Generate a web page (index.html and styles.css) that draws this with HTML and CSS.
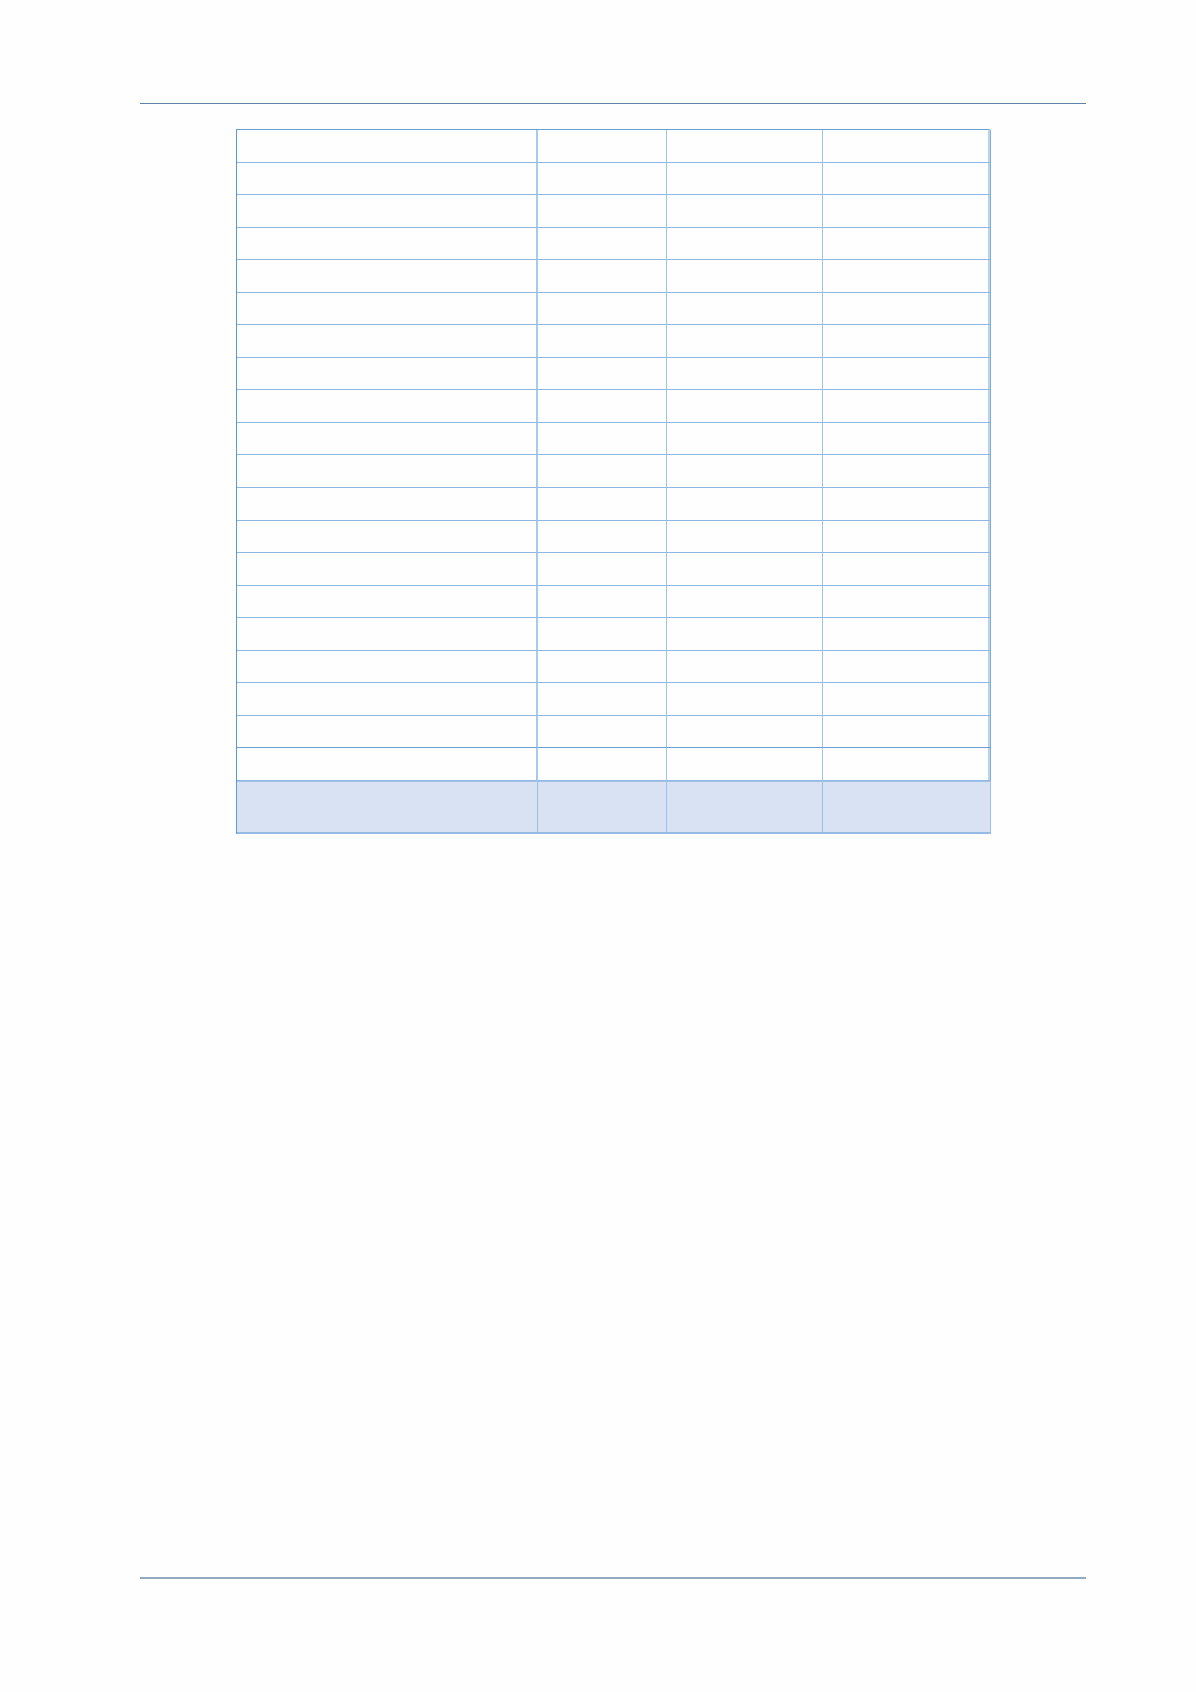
FILE: index.html
```html
<!DOCTYPE html>
<html lang="en">
<head>
<meta charset="utf-8">
<title>Table page</title>
<link rel="stylesheet" href="styles.css">
</head>
<body>
<div class="page">
  <div class="rule-top"></div>
  <div class="grid">
    <div class="c"></div><div class="c"></div><div class="c"></div><div class="c"></div>
    <div class="c"></div><div class="c"></div><div class="c"></div><div class="c"></div>
    <div class="c"></div><div class="c"></div><div class="c"></div><div class="c"></div>
    <div class="c"></div><div class="c"></div><div class="c"></div><div class="c"></div>
    <div class="c"></div><div class="c"></div><div class="c"></div><div class="c"></div>
    <div class="c"></div><div class="c"></div><div class="c"></div><div class="c"></div>
    <div class="c"></div><div class="c"></div><div class="c"></div><div class="c"></div>
    <div class="c"></div><div class="c"></div><div class="c"></div><div class="c"></div>
    <div class="c"></div><div class="c"></div><div class="c"></div><div class="c"></div>
    <div class="c"></div><div class="c"></div><div class="c"></div><div class="c"></div>
    <div class="c"></div><div class="c"></div><div class="c"></div><div class="c"></div>
    <div class="c"></div><div class="c"></div><div class="c"></div><div class="c"></div>
    <div class="c"></div><div class="c"></div><div class="c"></div><div class="c"></div>
    <div class="c"></div><div class="c"></div><div class="c"></div><div class="c"></div>
    <div class="c"></div><div class="c"></div><div class="c"></div><div class="c"></div>
    <div class="c"></div><div class="c"></div><div class="c"></div><div class="c"></div>
    <div class="c"></div><div class="c"></div><div class="c"></div><div class="c"></div>
    <div class="c"></div><div class="c"></div><div class="c"></div><div class="c"></div>
    <div class="c"></div><div class="c"></div><div class="c"></div><div class="c"></div>
    <div class="c"></div><div class="c"></div><div class="c"></div><div class="c"></div>
    <div class="c total"></div><div class="c total"></div><div class="c total"></div><div class="c total"></div>
  </div>
  <div class="rule-bottom"></div>
</div>
</body>
</html>
```

FILE: styles.css
```css
html, body {
  margin: 0;
  padding: 0;
  background: #fefefe;
  font-family: "Liberation Sans", Arial, sans-serif;
}

.page {
  width: 1196px;
  height: 1692px;
  display: flex;
  flex-direction: column;
  box-sizing: border-box;
  padding: 0 110px 0 140px;
}

.rule-top {
  margin-top: 103px;
  height: 1px;
  background: #5f80a8;
  flex: none;
}

.grid {
  margin: 25px 0 0 96px;
  width: 754px;
  display: grid;
  grid-template-columns: 301px 129px 156px 168px;
  grid-template-rows: repeat(20, 32.55px) 53px;
  box-sizing: border-box;
  border-left: 1px solid #5b9bd5;
  border-top: 1px solid #6a9ed3;
  border-right: 2px solid #b6d3f0;
  flex: none;
}

.c {
  box-sizing: border-box;
  border-right: 1px solid #9fc4ea;
  border-bottom: 1px solid #8fb9e4;
}

.c:nth-child(4n) {
  border-right: 1px solid #7eafe0;
}

.c:nth-child(4n+1) {
  border-right: 2px solid #a6caed;
}

.c:nth-child(n+73):nth-child(-n+76) {
  border-bottom: 1px solid #6a9ed6;
}

.c.total {
  background: #d9e2f3;
  border-top: 1px solid #a2c2e8;
  border-bottom: 2px solid #95bae6;
  border-right: 1px solid #9dbfe6;
}

.c.total:nth-child(4n) {
  border-right: 1px solid #9dbfe6;
}

.rule-bottom {
  margin-top: auto;
  margin-bottom: 113px;
  height: 2px;
  background: #93a9c2;
  flex: none;
}
```
